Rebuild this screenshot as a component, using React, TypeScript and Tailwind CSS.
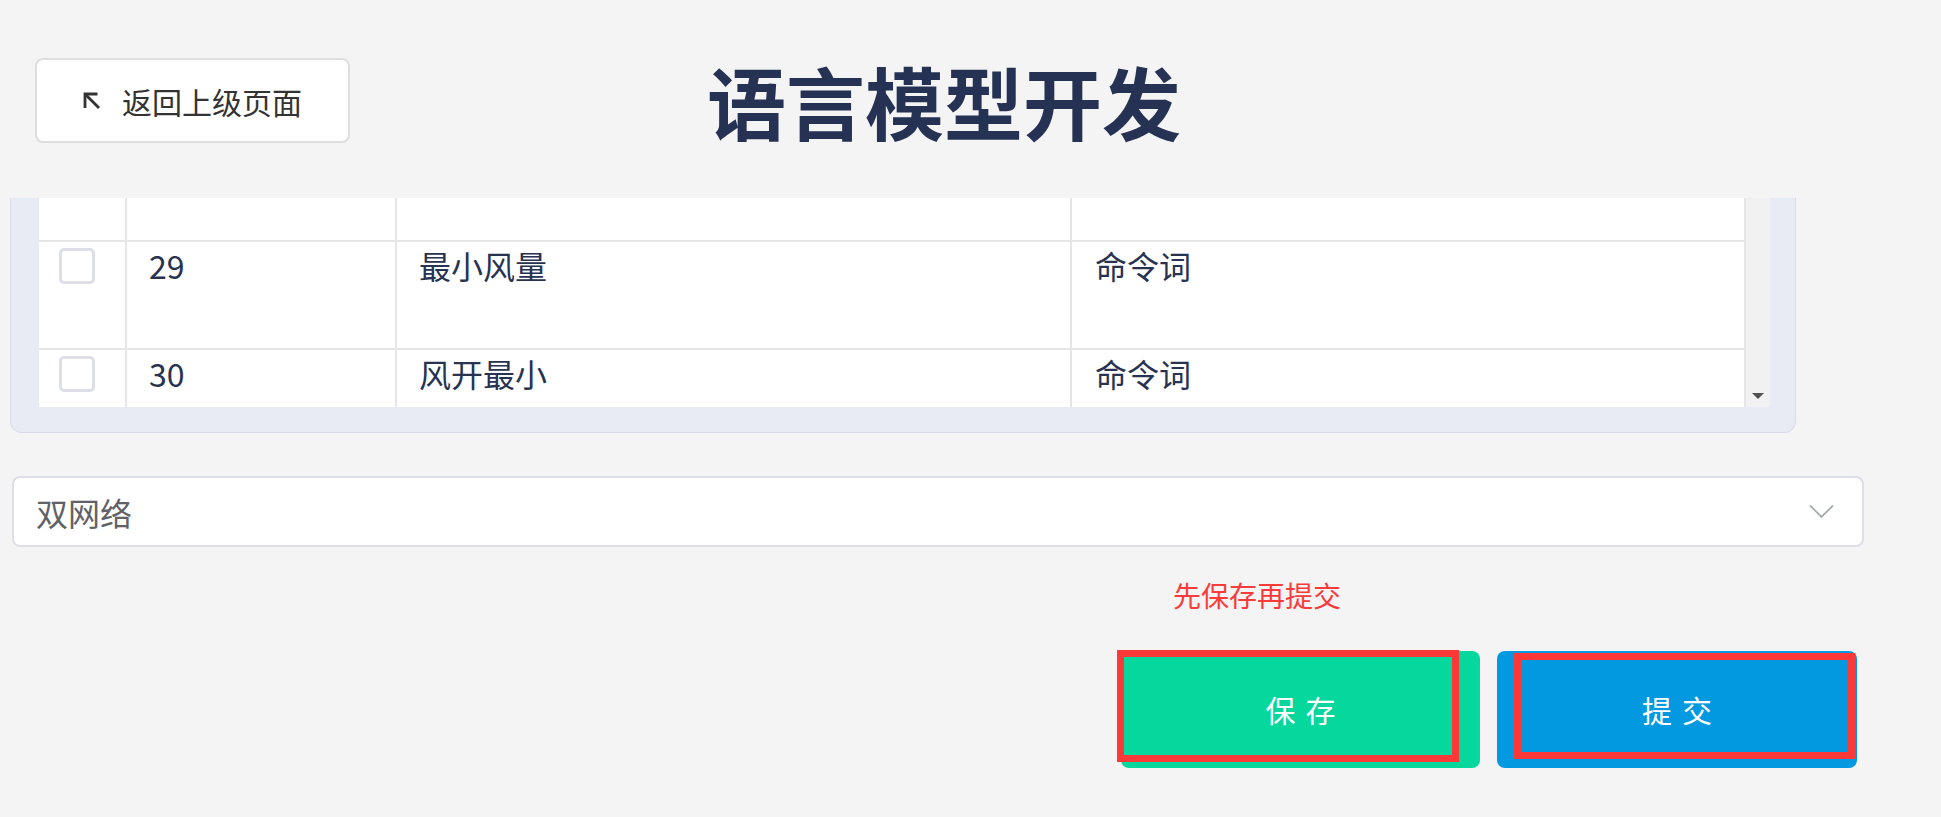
import React from 'react';

const FONT = '"Noto Sans CJK SC", "Noto Sans", sans-serif';

const ROWS = [
  { id: '', name: '', kind: '', h: 'h-[44px]', box: false },
  { id: '29', name: '最小风量', kind: '命令词', h: 'h-[108px]', box: true },
  { id: '30', name: '风开最小', kind: '命令词', h: 'h-[108px]', box: true },
];

function BackIcon() {
  return (
    <svg width="17" height="17" viewBox="0 0 17 17" fill="none" stroke="#333" strokeWidth="2.8" strokeLinecap="butt">
      <path d="M2 16V2h12.5" />
      <path d="M2 2l14 14" />
    </svg>
  );
}

function Chevron() {
  return (
    <svg width="25" height="15" viewBox="0 0 25 15" fill="none" stroke="#a8abb2" strokeWidth="1.8">
      <polyline points="1,1.5 12.5,13 24,1.5" />
    </svg>
  );
}

export default function App() {
  return (
    <div className="min-h-screen w-full bg-[#f4f4f4] overflow-hidden" style={{ fontFamily: FONT }}>
      {/* header */}
      <div className="h-[198px] pt-[58px] flex items-start">
        <div className="flex items-center">
          <button className="ml-[35px] w-[315px] h-[85px] bg-white border-2 border-[#dedede] rounded-[8px] flex items-center justify-center gap-[22px] text-[30px] text-[#333] leading-none">
            <BackIcon />
            <span>返回上级页面</span>
          </button>
          <h1 className="ml-[357px] text-[79px] font-bold leading-none text-[#263254]">语言模型开发</h1>
        </div>
      </div>

      {/* table panel */}
      <div className="ml-[10px] w-[1786px] h-[235px] bg-[#e8ebf3] border border-t-0 border-[#d9dce3] rounded-b-[12px] pl-[28px] pr-[25px]">
        <div className="h-[209px] flex overflow-hidden bg-white">
          <div className="flex-1">
            {ROWS.map((r, i) => (
              <div key={i} className={`grid grid-cols-[88px_270px_675px_674px] border-b-2 border-[#e6e6e6] ${r.h}`}>
                <div className="border-r-2 border-[#e6e6e6] pl-[20px] pt-[6px]">
                  {r.box && <div className="w-[36px] h-[36px] border-[3px] border-[#dcdfe6] rounded-[5px] bg-white" />}
                </div>
                <div className="border-r-2 border-[#e6e6e6] pl-[22px] text-[32px] leading-[46px] text-[#283352]">{r.id}</div>
                <div className="border-r-2 border-[#e6e6e6] pl-[22px] text-[32px] leading-[46px] text-[#283352]">{r.name}</div>
                <div className="border-r-2 border-[#e6e6e6] pl-[23px] text-[32px] leading-[46px] text-[#283352]">{r.kind}</div>
              </div>
            ))}
          </div>
          <div className="w-[24px] bg-[#f1f1f1] flex flex-col justify-end items-center pb-[8px]">
            <div className="w-0 h-0 border-l-[6px] border-r-[6px] border-t-[6px] border-l-transparent border-r-transparent border-t-[#505050]" />
          </div>
        </div>
      </div>

      {/* select */}
      <div className="mt-[43px] ml-[12px] w-[1852px] h-[71px] bg-white border-2 border-[#dcdfe6] rounded-[8px] flex items-center justify-between pl-[22px] pr-[28px]">
        <span className="text-[32px] text-[#606266] leading-none">双网络</span>
        <Chevron />
      </div>

      <div className="mt-[27px] ml-[1173px] text-[28px] leading-[42px] text-[#f93b3b]">先保存再提交</div>

      {/* actions */}
      <div className="mt-[35px] flex justify-end gap-[17px] pr-[84px]">
        <div className="relative">
          <button className="w-[359px] h-[117px] rounded-[8px] bg-[#05d79d] text-white text-[30px] tracking-[10px] pl-[10px]">保存</button>
          <div className="absolute left-[-4px] top-[-1px] w-[342px] h-[112px] border-[7px] border-[#fc3838] pointer-events-none" />
        </div>
        <div className="relative">
          <button className="w-[360px] h-[117px] rounded-[8px] bg-[#0399e0] text-white text-[30px] tracking-[10px] pl-[10px]">提交</button>
          <div className="absolute left-[17px] top-[2px] w-[341px] h-[106px] border-[7px] border-[#fc3838] pointer-events-none" />
        </div>
      </div>
    </div>
  );
}
